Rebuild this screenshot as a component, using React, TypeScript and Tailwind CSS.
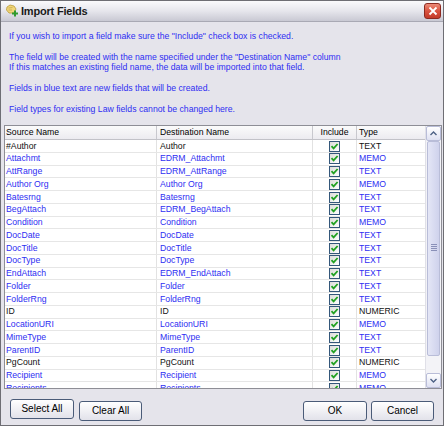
import React from "react";

type Row = { src: string; dest: string; type: string; existing?: boolean };

const ROWS: Row[] = [
  { src: "#Author", dest: "Author", type: "TEXT", existing: true },
  { src: "Attachmt", dest: "EDRM_Attachmt", type: "MEMO" },
  { src: "AttRange", dest: "EDRM_AttRange", type: "TEXT" },
  { src: "Author Org", dest: "Author Org", type: "MEMO" },
  { src: "Batesrng", dest: "Batesrng", type: "TEXT" },
  { src: "BegAttach", dest: "EDRM_BegAttach", type: "TEXT" },
  { src: "Condition", dest: "Condition", type: "MEMO" },
  { src: "DocDate", dest: "DocDate", type: "TEXT" },
  { src: "DocTitle", dest: "DocTitle", type: "TEXT" },
  { src: "DocType", dest: "DocType", type: "TEXT" },
  { src: "EndAttach", dest: "EDRM_EndAttach", type: "TEXT" },
  { src: "Folder", dest: "Folder", type: "TEXT" },
  { src: "FolderRng", dest: "FolderRng", type: "TEXT" },
  { src: "ID", dest: "ID", type: "NUMERIC", existing: true },
  { src: "LocationURI", dest: "LocationURI", type: "MEMO" },
  { src: "MimeType", dest: "MimeType", type: "TEXT" },
  { src: "ParentID", dest: "ParentID", type: "TEXT" },
  { src: "PgCount", dest: "PgCount", type: "NUMERIC", existing: true },
  { src: "Recipient", dest: "Recipient", type: "MEMO" },
  { src: "Recipients", dest: "Recipients", type: "MEMO" },
];

function CheckBox() {
  return (
    <div className="w-[11px] h-[11px] border border-[#34577a] bg-gradient-to-br from-[#dcdcd8] to-white flex items-center justify-center">
      <svg width="9" height="9" viewBox="0 0 9 9">
        <path d="M1.5 4.2 L3.6 6.4 L7.6 2" stroke="#21a121" strokeWidth="1.8" fill="none" />
      </svg>
    </div>
  );
}

function Btn({ label, w }: { label: string; w: string }) {
  return (
    <button
      className={`${w} h-[20px] rounded-[3px] border border-[#4a5b78] bg-gradient-to-b from-white to-[#e2e2ea] text-[10px] text-black leading-none`}
    >
      {label}
    </button>
  );
}

function ScrollArrow({ up }: { up?: boolean }) {
  return (
    <div className="h-[15px] w-[15px] rounded-[2px] border border-[#b9bdd8] bg-gradient-to-b from-white to-[#dfe1f2] flex items-center justify-center">
      <svg width="7" height="5" viewBox="0 0 7 5">
        <path d={up ? "M0.5 4 L3.5 1 L6.5 4" : "M0.5 1 L3.5 4 L6.5 1"} stroke="#4d6185" strokeWidth="1.4" fill="none" />
      </svg>
    </div>
  );
}

export default function App() {
  const blue = "text-[#2e2ef2]";
  return (
    <div
      className="w-[444px] h-[426px] overflow-hidden flex flex-col border border-[#6e6e74] bg-[#e5e4eb]"
      style={{ fontFamily: '"Liberation Sans", Arial, sans-serif' }}
    >
      {/* title bar */}
      <div className="h-[21px] shrink-0 flex items-center pl-[4px] pr-[2px] bg-gradient-to-b from-[#fafafc] via-[#e6e6ec] to-[#c9c9d3] border-b border-[#a9a9b4]">
        <svg width="14" height="14" viewBox="0 0 14 14" className="shrink-0">
          <path d="M2 3 L5 1 L9 2 L11 5 L9 9 L4 9 L1.5 6 Z" fill="#f0d67a" stroke="#b99a3a" strokeWidth="0.8" />
          <path d="M3.5 4 L7.5 3.5 M3.5 6 L7 6" stroke="#c9a94a" strokeWidth="0.8" />
          <rect x="7" y="8.5" width="6" height="2" fill="#2f9a2f" />
          <rect x="9" y="6.5" width="2" height="6" fill="#2f9a2f" />
        </svg>
        <span className="ml-[2px] text-[11px] font-bold text-[#1a1a1a] tracking-[-0.2px]">Import Fields</span>
        <div className="ml-auto w-[17px] h-[16px] rounded-[3px] border border-[#8c2a20] bg-gradient-to-b from-[#ec8a78] via-[#d9533f] to-[#c33a28] flex items-center justify-center">
          <svg width="10" height="10" viewBox="0 0 10 10">
            <path d="M1.5 1.5 L8.5 8.5 M8.5 1.5 L1.5 8.5" stroke="white" strokeWidth="1.8" />
          </svg>
        </div>
      </div>

      {/* instructions */}
      <div className={`pl-[8px] pt-[9px] text-[8.7px] leading-[10.4px] ${blue}`}>
        <p>If you wish to import a field make sure the "Include" check box is checked.</p>
        <p className="mt-[10.4px]">The field will be created with the name specified under the "Destination Name" column</p>
        <p>If this matches an existing field name, the data will be imported into that field.</p>
        <p className="mt-[10.4px]">Fields in blue text are new fields that will be created.</p>
        <p className="mt-[10.4px]">Field types for existing Law fields cannot be changed here.</p>
      </div>

      {/* grid */}
      <div className="mt-[11px] ml-[3px] mr-[1px] h-[264px] shrink-0 flex border border-[#8e8e96] bg-white">
        <div className="flex-1 overflow-hidden text-[8.7px]">
          <div className="flex h-[14px] bg-gradient-to-b from-[#fbfbfb] to-[#ecebf0] border-b border-[#c2c2c8] text-black">
            <div className="w-[152px] pl-[1px] border-r border-[#c8c8ce] flex items-center">Source Name</div>
            <div className="w-[156px] pl-[3px] border-r border-[#c8c8ce] flex items-center">Destination Name</div>
            <div className="w-[44px] border-r border-[#c8c8ce] flex items-center justify-center">Include</div>
            <div className="flex-1 pl-[2px] flex items-center">Type</div>
          </div>
          {ROWS.map((r) => {
            const c = r.existing ? "text-[#111]" : blue;
            return (
              <div key={r.src} className="flex h-[12.75px] border-b border-[#e6e6e6]">
                <div className={`w-[152px] pl-[1px] border-r border-[#e2e2e2] flex items-center ${c}`}>{r.src}</div>
                <div className={`w-[156px] pl-[3px] border-r border-[#e2e2e2] flex items-center ${c}`}>{r.dest}</div>
                <div className="w-[44px] border-r border-[#e2e2e2] flex items-center justify-center">
                  <CheckBox />
                </div>
                <div className={`flex-1 pl-[2px] flex items-center ${c}`}>{r.type}</div>
              </div>
            );
          })}
        </div>
        {/* scrollbar */}
        <div className="w-[16px] shrink-0 flex flex-col bg-[#f3f3f7] border-l border-[#e0e0e8]">
          <ScrollArrow up />
          <div className="h-[215px] mx-[1px] rounded-[2px] border border-[#b9bdd8] bg-gradient-to-r from-[#e4e6f6] to-[#cfd2ec] flex items-end justify-center pb-[104px]">
            <div className="flex flex-col gap-[1px]">
              <div className="w-[6px] h-[1px] bg-[#8a90b8]" />
              <div className="w-[6px] h-[1px] bg-[#8a90b8]" />
              <div className="w-[6px] h-[1px] bg-[#8a90b8]" />
              <div className="w-[6px] h-[1px] bg-[#8a90b8]" />
            </div>
          </div>
          <div className="flex-1" />
          <ScrollArrow />
        </div>
      </div>

      {/* buttons */}
      <div className="flex items-center mt-[8px] pl-[9px] pr-[9px]">
        <Btn label="Select All" w="w-[64px]" />
        <div className="ml-[5px]">
          <Btn label="Clear All" w="w-[63px]" />
        </div>
        <div className="ml-auto">
          <Btn label="OK" w="w-[64px]" />
        </div>
        <div className="ml-[4px]">
          <Btn label="Cancel" w="w-[63px]" />
        </div>
      </div>
    </div>
  );
}
